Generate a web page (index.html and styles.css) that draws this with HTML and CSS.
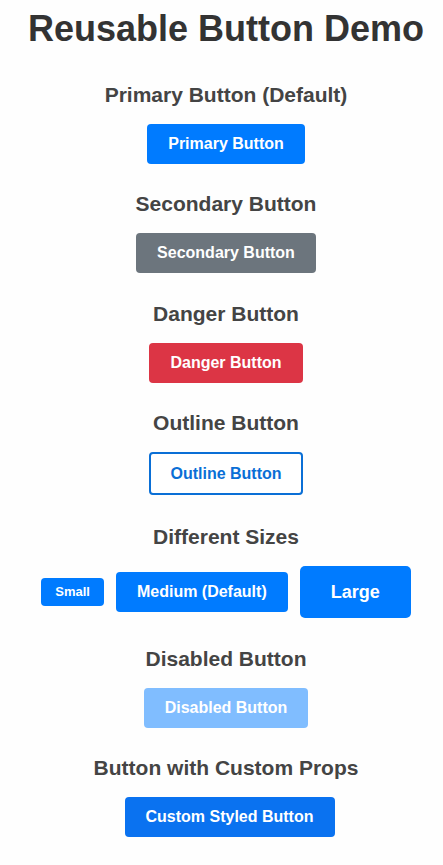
FILE: index.html
```html
<!DOCTYPE html>
<html lang="en">
<head>
<meta charset="utf-8">
<title>Reusable Button Demo</title>
<link rel="stylesheet" href="styles.css">
</head>
<body>
<div class="app">
  <h1 class="title">Reusable Button Demo</h1>

  <section class="section">
    <h3 class="section-title">Primary Button (Default)</h3>
    <div class="row"><button class="btn btn-primary">Primary Button</button></div>
  </section>

  <section class="section">
    <h3 class="section-title">Secondary Button</h3>
    <div class="row"><button class="btn btn-secondary">Secondary Button</button></div>
  </section>

  <section class="section">
    <h3 class="section-title">Danger Button</h3>
    <div class="row"><button class="btn btn-danger">Danger Button</button></div>
  </section>

  <section class="section section-outline">
    <h3 class="section-title">Outline Button</h3>
    <div class="row"><button class="btn btn-outline">Outline Button</button></div>
  </section>

  <section class="section section-sizes">
    <h3 class="section-title">Different Sizes</h3>
    <div class="row sizes">
      <button class="btn btn-primary btn-small">Small</button>
      <button class="btn btn-primary">Medium (Default)</button>
      <button class="btn btn-primary btn-large">Large</button>
    </div>
  </section>

  <section class="section section-disabled">
    <h3 class="section-title">Disabled Button</h3>
    <div class="row"><button class="btn btn-primary" disabled>Disabled Button</button></div>
  </section>

  <section class="section">
    <h3 class="section-title">Button with Custom Props</h3>
    <div class="row"><button class="btn btn-primary btn-custom">Custom Styled Button</button></div>
  </section>
</div>
</body>
</html>
```
FILE: styles.css
```css
html, body {
  margin: 0;
  padding: 0;
  background: #fefefe;
}

body {
  font-family: "Liberation Sans", Arial, sans-serif;
}

.app {
  padding: 9px 0 0 9px;
  display: flex;
  flex-direction: column;
  align-items: center;
  text-align: center;
}

.title {
  margin: 0 0 34px;
  font-size: 36px;
  line-height: 40px;
  font-weight: bold;
  color: #333;
}

.section {
  display: flex;
  flex-direction: column;
  align-items: center;
  margin-bottom: 28.4px;
}

.section-outline {
  margin-bottom: 29.4px;
}

.section-sizes {
  margin-bottom: 29.5px;
}

.section-disabled {
  margin-bottom: 27.8px;
}

.section-title {
  margin: 0 0 17px;
  font-size: 21px;
  line-height: 24px;
  font-weight: bold;
  color: #444;
}

.row {
  display: flex;
  align-items: center;
  justify-content: center;
}

.sizes {
  gap: 12px;
}

.btn {
  font-family: "Liberation Sans", Arial, sans-serif;
  font-size: 16px;
  font-weight: bold;
  line-height: 20px;
  padding: 10px 21px;
  border: none;
  border-radius: 4px;
  color: #fff;
  cursor: pointer;
}

.btn-primary {
  background: #007bff;
}

.btn-secondary {
  background: #6c757d;
}

.btn-danger {
  background: #dc3545;
}

.btn-outline {
  background: #fff;
  color: #0a6fd6;
  border: 2px solid #0a6fd6;
  padding: 9px 19px;
  line-height: 21px;
}

.btn-small {
  font-size: 13px;
  line-height: 16px;
  padding: 6px 14px;
}

.btn-large {
  font-size: 18px;
  line-height: 22px;
  padding: 15px 31px;
  border-radius: 5px;
}

.btn:disabled {
  background: #80bdff;
  cursor: not-allowed;
}

.btn-custom {
  background: #0a72f0;
  margin-left: 7px;
}
```
